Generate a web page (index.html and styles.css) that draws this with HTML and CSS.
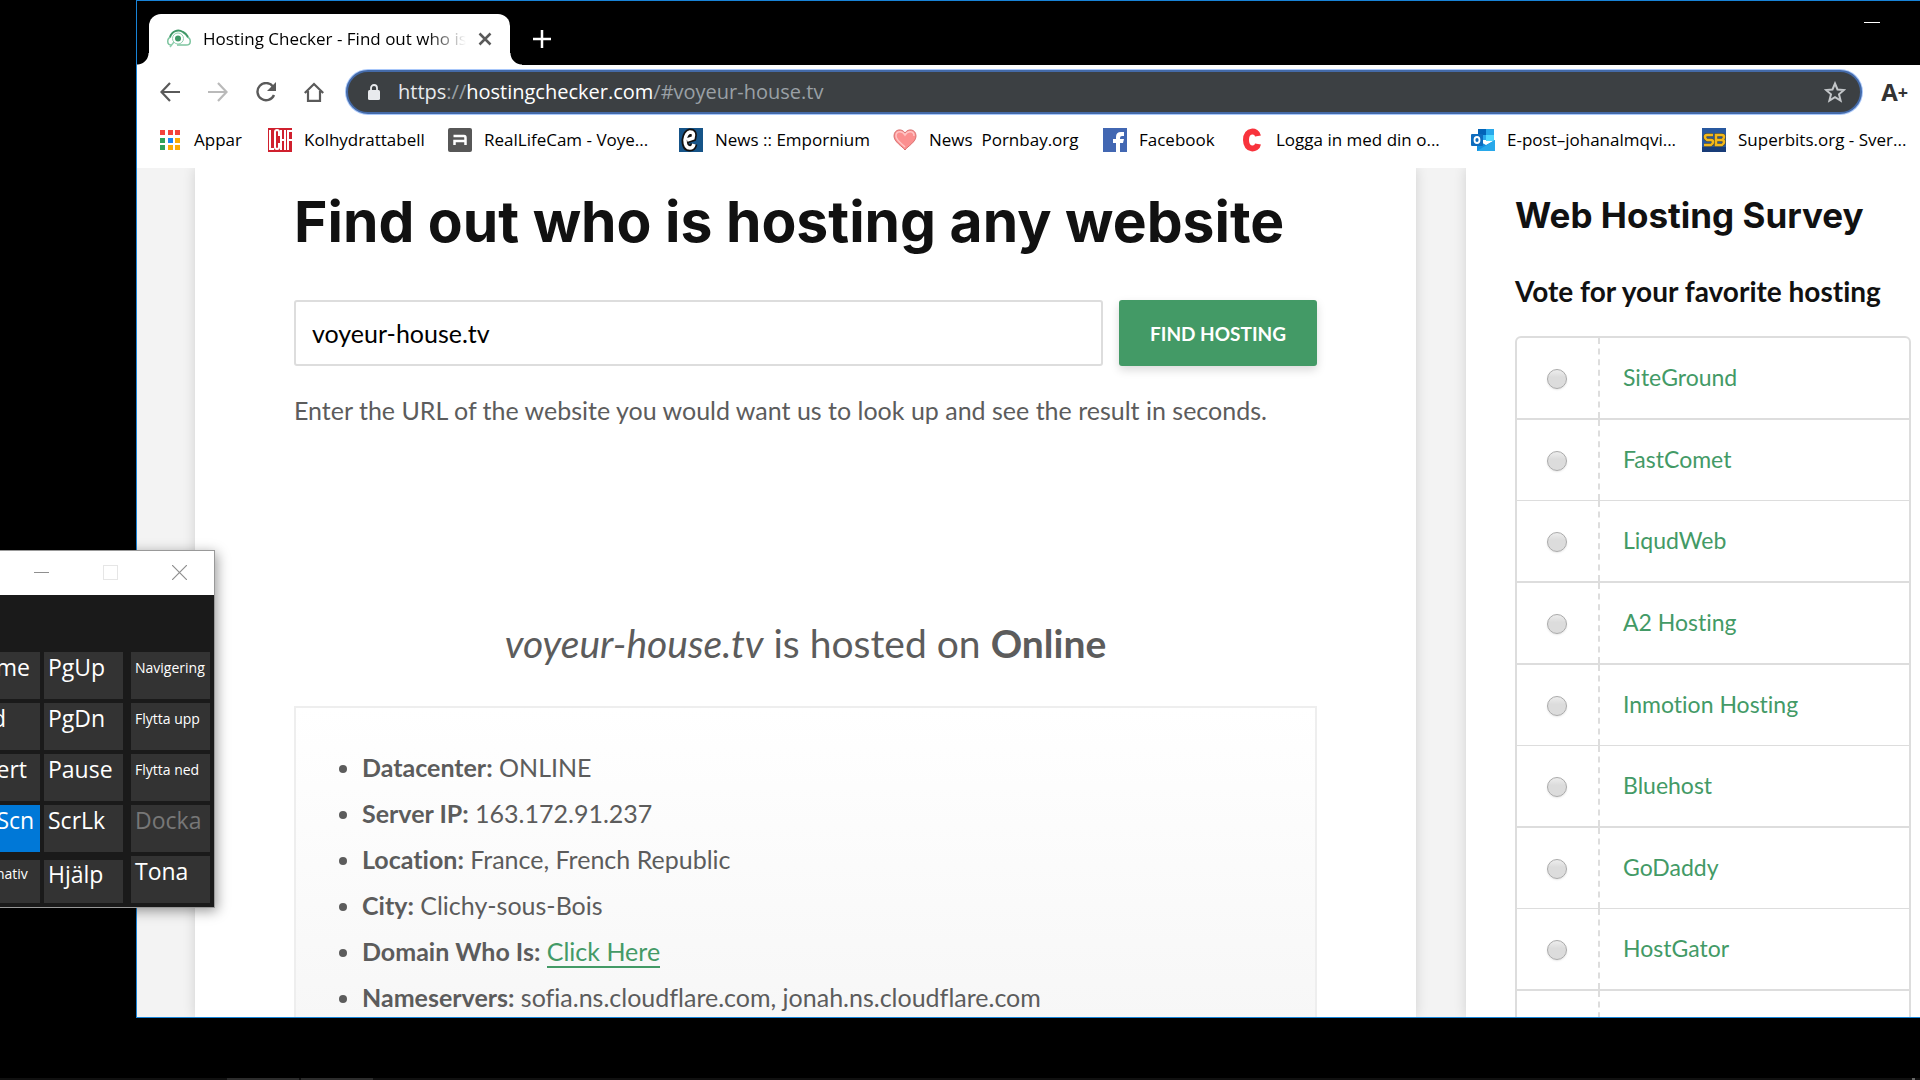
FILE: index.html
```html
<!DOCTYPE html>
<html lang="sv">
<head>
    <meta charset="UTF-8">
    <meta name="viewport" content="width=device-width, initial-scale=1.0">
    <title>Hosting Checker - Find out who is hosting any website</title>
    <link rel="stylesheet" href="styles.css">
</head>
<body>
<!-- Browser window -->
<div class="browser">
    <div class="tab-strip">
        <div class="tab">
            <svg class="tab-icon" width="24" height="20" viewBox="0 0 24 20" fill="none">
                <path d="M5 16C-1 16 0 9 4 8M20 8C24 9 25 16 19 16H10" stroke="#7cc49e" stroke-width="1.500"/>
                <path d="M3 8C5 2 11 0 16 3C18 4 20 6 21 8" stroke="#3f9867" stroke-width="2"/>
                <circle cx="11" cy="9.500" r="5.500" stroke="#8fcfae"/>
                <circle cx="11" cy="9.500" r="3" fill="#3f9867"/>
                <path d="M7 13L3 18" stroke="#8fcfae" stroke-width="1.500"/>
            </svg>
            <span class="tab-title">Hosting Checker - Find out who is</span>
            <button class="icon-button" aria-label="Stäng flik">
                <svg width="14" height="14" viewBox="0 0 14 14" stroke="#5a5a5a" stroke-width="2.500"><path d="M1.500 1.500L12.500 12.500M12.500 1.500L1.500 12.500"/></svg>
            </button>
        </div>
        <button class="icon-button new-tab" aria-label="Ny flik">
            <svg width="18" height="18" viewBox="0 0 18 18" stroke="#fff" stroke-width="2.500"><path d="M9 0V18M0 9H18"/></svg>
        </button>
        <button class="icon-button minimize" aria-label="Minimera">
            <svg width="16" height="2" viewBox="0 0 16 2"><path d="M0 0H16V1H0Z" fill="#fff"/></svg>
        </button>
    </div>

    <div class="toolbar">
        <button class="icon-button" aria-label="Bakåt">
            <svg width="20" height="20" viewBox="0 0 20 20" fill="none" stroke="#5a5a5a" stroke-width="2.200"><path d="M20 10H2M10 1L1.500 10L10 19"/></svg>
        </button>
        <button class="icon-button" aria-label="Framåt">
            <svg width="20" height="20" viewBox="0 0 20 20" fill="none" stroke="#bababa" stroke-width="2.200"><path d="M0 10H18M10 1L18.500 10L10 19"/></svg>
        </button>
        <button class="icon-button" aria-label="Ladda om">
            <svg width="20" height="20" viewBox="0 0 20 20" fill="none" stroke="#5a5a5a" stroke-width="2.400"><path d="M18 13A8.600 8.600 0 1 1 17 4.500"/><path d="M20 0V9H11Z" fill="#5a5a5a" stroke="none"/></svg>
        </button>
        <button class="icon-button" aria-label="Startsida">
            <svg width="20" height="20" viewBox="0 0 20 20" fill="none" stroke="#5a5a5a" stroke-width="2.200"><path d="M0.800 11L10 2L19.200 11M4 9V18.800H16V9"/></svg>
        </button>
        <div class="address">
            <svg width="12" height="16" viewBox="0 0 12 16"><path d="M3 7V4A3 3 0 0 1 9 4V7" fill="none" stroke="#e8eaed" stroke-width="1.800"/><rect y="6" width="12" height="10" rx="1.500" fill="#e8eaed"/></svg>
            <span class="url"><span class="scheme">https<i>://</i></span>hostingchecker.com<i>/#voyeur-house.tv</i></span>
            <button class="icon-button" aria-label="Bokmärk sidan">
                <svg width="22" height="22" viewBox="0 0 22 22" fill="none" stroke="#c3c6c9" stroke-width="2"><path d="M11 2.500L13.500 8.500L20 9L15 13.300L16.600 19.600L11 16.200L5.400 19.600L7 13.300L2 9L8.500 8.500Z"/></svg>
            </button>
        </div>
        <button class="icon-button zoom-text" aria-label="Större text">A<small>+</small></button>
    </div>

    <nav class="bookmarks">
        <a href="#">
            <svg width="24" height="24" viewBox="0 0 24 24">
                <path d="M2 2H7V7H2ZM10 2H15V7H10ZM17 2H22V7H17Z" fill="#f4433c"/>
                <path d="M2 10H7V15H2ZM2 17H7V22H2Z" fill="#2fa25a"/>
                <path d="M10 10H15V15H10Z" fill="#1c86f2"/>
                <path d="M17 10H22V15H17ZM10 17H15V22H10ZM17 17H22V22H17Z" fill="#fbab04"/>
            </svg>
            <span>Appar</span>
        </a>
        <a href="#">
            <svg width="24" height="24" viewBox="0 0 24 24" fill="none">
                <path d="M0 0H24V24H0Z" fill="#d0202e"/>
                <path d="M2 2V21H6M11 8V4Q11 2 9 2T7 4V19Q7 21 9 21T11 19V15M13 2V22M17 2V22M13 12H17M20 22V3H24M20 12H24" stroke="#fff" stroke-width="2"/>
            </svg>
            <span>Kolhydrattabell</span>
        </a>
        <a href="#">
            <svg width="24" height="24" viewBox="0 0 24 24" fill="none">
                <rect width="24" height="24" rx="2" fill="#575757"/>
                <path d="M6.500 17V13H17.500M5.500 8H16Q17.500 8 17.500 10V17" stroke="#fff" stroke-width="2.500"/>
            </svg>
            <span>RealLifeCam - Voye...</span>
        </a>
        <a href="#">
            <svg width="24" height="24" viewBox="0 0 24 24" fill="none">
                <path d="M0 0H24V24H0Z" fill="#165488"/>
                <path d="M8 12L14 10Q16 4 11 4Q7 5 6 12Q6 20 11 20Q14 20 15 16" stroke="#111" stroke-width="7"/>
                <path d="M8 12L14 10Q16 4 11 4Q7 5 6 12Q6 20 11 20Q14 20 15 16" stroke="#fff" stroke-width="3.500"/>
            </svg>
            <span>News :: Empornium</span>
        </a>
        <a href="#">
            <svg width="24" height="24" viewBox="0 0 24 24">
                <path d="M12 22C9 18 1 14 1 8C1 1 9 0 12 5C15 0 23 1 23 8C23 14 15 18 12 22Z" fill="#fb8f8f" stroke="#d87070"/>
                <path d="M12 19C9 16 3 12 3 8C3 3 9 2 12 7C15 2 21 3 21 8" fill="none" stroke="#ffc4c4" stroke-width="1.500"/>
            </svg>
            <span>News&nbsp; Pornbay.org</span>
        </a>
        <a href="#">
            <svg width="24" height="24" viewBox="0 0 24 24">
                <path d="M0 0H24V24H0Z" fill="#4267b2"/>
                <path d="M13 24V15H10V11H13V9Q13 4 18 4H21V8H19Q17 8 17 10V11H21L20 15H17V24Z" fill="#fff"/>
            </svg>
            <span>Facebook</span>
        </a>
        <a href="#">
            <svg width="24" height="24" viewBox="0 0 24 24" fill="none">
                <path d="M18 8C17 2 6 1 6 12C6 23 17 22 18 16" stroke="#f8333c" stroke-width="6"/>
            </svg>
            <span>Logga in med din o...</span>
        </a>
        <a href="#">
            <svg width="24" height="24" viewBox="0 0 24 24">
                <path d="M7 1H23V12H7Z" fill="#28a8ea"/>
                <path d="M7 1H15V7H7Z" fill="#0364b8"/>
                <path d="M15 7H23V13H15Z" fill="#50d9ff"/>
                <path d="M6 12L15 17L24 12V23H6Z" fill="#1490df"/>
                <path d="M6 23L24 12V23Z" fill="#28a8ea"/>
                <rect y="6" width="12" height="12" rx="1" fill="#0f6cbd"/>
                <ellipse cx="6" cy="12" rx="2.500" ry="3" fill="none" stroke="#fff" stroke-width="1.800"/>
            </svg>
            <span>E-post–johanalmqvi...</span>
        </a>
        <a href="#">
            <svg width="24" height="24" viewBox="0 0 24 24" fill="none">
                <path d="M0 0H24V24H0Z" fill="#28589f"/>
                <path d="M0 19H24V24H0Z" fill="#183c78"/>
                <path d="M11 7H5Q3 7 3 9T5 12H9Q11 12 11 14T9 17H2M14 17V7H20Q22 7 22 9T20 12H14H20Q22 12 22 14T20 17Z" stroke="#4a4a3a" stroke-width="3.500"/>
                <path d="M11 7H5Q3 7 3 9T5 12H9Q11 12 11 14T9 17H2M14 17V7H20Q22 7 22 9T20 12H14H20Q22 12 22 14T20 17Z" stroke="#f3b81a" stroke-width="2.500"/>
            </svg>
            <span>Superbits.org - Sver...</span>
        </a>
    </nav>

    <div class="page">
        <main class="content">
            <h1>Find out who is hosting any website</h1>
            <form class="search">
                <input type="text" value="voyeur-house.tv" aria-label="Website URL">
                <button type="button">FIND HOSTING</button>
            </form>
            <p class="hint">Enter the URL of the website you would want us to look up and see the result in seconds.</p>
            <h2 class="result"><em>voyeur-house.tv</em> is hosted on <b>Online</b></h2>
            <ul class="details">
                <li><b>Datacenter:</b> ONLINE</li>
                <li><b>Server IP:</b> 163.172.91.237</li>
                <li><b>Location:</b> France, French Republic</li>
                <li><b>City:</b> Clichy-sous-Bois</li>
                <li><b>Domain Who Is:</b> <a href="#">Click Here</a></li>
                <li><b>Nameservers:</b> sofia.ns.cloudflare.com, jonah.ns.cloudflare.com</li>
            </ul>
        </main>
        <aside class="survey">
            <h2>Web Hosting Survey</h2>
            <h3>Vote for your favorite hosting</h3>
            <div class="options">
                <div class="option"><span><input type="radio" name="host" id="siteground"></span><label for="siteground">SiteGround</label></div>
                <div class="option thin"><span><input type="radio" name="host" id="fastcomet"></span><label for="fastcomet">FastComet</label></div>
                <div class="option"><span><input type="radio" name="host" id="liqudweb"></span><label for="liqudweb">LiqudWeb</label></div>
                <div class="option"><span><input type="radio" name="host" id="a2"></span><label for="a2">A2 Hosting</label></div>
                <div class="option thin"><span><input type="radio" name="host" id="inmotion"></span><label for="inmotion">Inmotion Hosting</label></div>
                <div class="option"><span><input type="radio" name="host" id="bluehost"></span><label for="bluehost">Bluehost</label></div>
                <div class="option thin"><span><input type="radio" name="host" id="godaddy"></span><label for="godaddy">GoDaddy</label></div>
                <div class="option"><span><input type="radio" name="host" id="hostgator"></span><label for="hostgator">HostGator</label></div>
                <div class="option"><span></span></div>
            </div>
        </aside>
    </div>
</div>

<!-- On-screen keyboard, partly outside the left edge -->
<div class="keyboard">
    <div class="title-bar">
        <button class="icon-button" aria-label="Minimera"><svg width="15" height="15" viewBox="0 0 15 15"><path d="M0 7H15V8H0Z" fill="#8f8f8f"/></svg></button>
        <button class="icon-button" aria-label="Maximera" disabled><svg width="15" height="15" viewBox="0 0 15 15" fill="none" stroke="#e6e6e6"><rect x="0.500" y="0.500" width="14" height="14"/></svg></button>
        <button class="icon-button" aria-label="Stäng"><svg width="15" height="15" viewBox="0 0 15 15" stroke="#8f8f8f" stroke-width="1.200"><path d="M0 0L15 15M15 0L0 15"/></svg></button>
    </div>
    <div class="keys">
        <div class="key-column">
            <button>Home</button>
            <button>End</button>
            <button>Insert</button>
            <button class="active">PrtScn</button>
            <button class="small short">Alternativ</button>
        </div>
        <div class="key-column">
            <button>PgUp</button>
            <button>PgDn</button>
            <button>Pause</button>
            <button>ScrLk</button>
            <button class="short">Hjälp</button>
        </div>
        <div class="key-column last">
            <button class="small">Navigering</button>
            <button class="small">Flytta upp</button>
            <button class="small">Flytta ned</button>
            <button disabled>Docka</button>
            <button>Tona</button>
        </div>
    </div>
</div>

<div class="taskbar"><i></i><i></i><i></i></div>
</body>
</html>
```
FILE: styles.css
```css
* {
    box-sizing: border-box;
}

body {
    margin: 0;
    height: 100vh;
    overflow: hidden;
    background-color: #000;
    font-family: "Open Sans", "Noto Sans", sans-serif;
    display: flex;
    flex-direction: column;
}

.icon-button {
    display: flex;
    align-items: center;
    justify-content: center;
    padding: 0;
    border: none;
    background: none;
}

.browser {
    flex: 1;
    min-height: 0;
    display: flex;
    flex-direction: column;
    margin: 0 0 60px 136px;
    border: 1px solid #1883d7;
    border-right: none;
    overflow: hidden;
}

.tab-strip {
    display: flex;
    flex: none;
    height: 64px;
    padding: 13px 40px 0 12px;
}

.tab {
    position: relative;
    display: flex;
    align-items: center;
    width: 361px;
    padding: 0 18px 2px;
    background-color: #fff;
    border-radius: 12px 12px 0 0;
}

.tab::before,
.tab::after {
    content: "";
    position: absolute;
    bottom: 0;
    width: 12px;
    height: 12px;
}

.tab::before {
    left: -12px;
    background: radial-gradient(circle at 0 0, #000 11px, #fff 12px);
}

.tab::after {
    right: -12px;
    background: radial-gradient(circle at 100% 0, #000 11px, #fff 12px);
}

.tab-title {
    flex: 1;
    margin: 0 12px;
    overflow: hidden;
    white-space: nowrap;
    font-size: 17px;
    -webkit-mask-image: linear-gradient(to right, #000 85%, transparent);
    mask-image: linear-gradient(to right, #000 85%, transparent);
}

.new-tab {
    margin-left: 23px;
    padding-bottom: 2px;
}

.minimize {
    height: 17px;
    margin-left: auto;
}

.toolbar {
    display: flex;
    flex: none;
    align-items: center;
    gap: 28px;
    height: 53px;
    padding: 0 12px 0 23px;
    background-color: #fff;
}

.address {
    flex: 1;
    display: flex;
    align-items: center;
    height: 44px;
    margin-left: -6px;
    padding: 0 14px 0 20px;
    background-color: #3c4043;
    border: 2px solid #446aa8;
    border-radius: 22px;
    box-shadow: 0 0 0 1px #a8c7fa;
}

.url {
    flex: 1;
    margin-left: 18px;
    font-size: 20px;
    color: #fff;
}

.url i {
    font-style: normal;
    color: #9aa0a6;
}

.scheme {
    color: #e8eaed;
}

.zoom-text {
    margin-left: -9px;
    font: bold 24px "Open Sans", sans-serif;
    color: #333;
}

.zoom-text small {
    font-size: 18px;
}

.bookmarks {
    display: grid;
    grid-template-columns: 110px 180px 231px 214px 210px 137px 231px 231px auto;
    align-items: center;
    flex: none;
    height: 50px;
    padding: 0 0 7px 21px;
    background-color: #fff;
}

.bookmarks a {
    display: flex;
    align-items: center;
    gap: 12px;
    color: #000;
    font-size: 17px;
    line-height: 22px;
    text-decoration: none;
    white-space: nowrap;
}

.page {
    flex: 1;
    min-height: 0;
    display: flex;
    gap: 50px;
    padding-left: 58px;
    overflow: hidden;
    background-color: #f3f3f3;
    font-family: Lato, sans-serif;
    font-variant-ligatures: none;
    color: #5c5c5c;
}

.content {
    flex: 1;
    min-width: 0;
    padding: 20px 99px 0;
    background-color: #fff;
    box-shadow: 0 0 12px rgba(0, 0, 0, 0.14);
}

.content h1 {
    margin: 0;
    font: bold 57px/68px Inter, sans-serif;
    color: #111;
    white-space: nowrap;
}

.search {
    display: flex;
    gap: 16px;
    margin-top: 44px;
}

.search input {
    flex: 1;
    min-width: 0;
    height: 66px;
    padding: 0 16px;
    border: 2px solid #ddd;
    border-radius: 3px;
    font: 25px Lato, sans-serif;
    color: #000;
}

.search button {
    width: 198px;
    border: none;
    border-radius: 3px;
    background-color: #439a66;
    box-shadow: 0 4px 10px rgba(0, 0, 0, 0.15);
    font: bold 19px Lato, sans-serif;
    color: #fff;
}

.hint {
    margin: 21px 0 0;
    font-size: 25px;
    line-height: 46px;
    white-space: nowrap;
}

.result {
    margin: 180px 0 0;
    font-size: 39px;
    font-weight: normal;
    line-height: 60px;
    text-align: center;
}

.details {
    margin: 33px 0 0;
    padding: 36px 0 40px 66px;
    border: 2px solid #eee;
    background: linear-gradient(#fff, #f6f6f6);
    font-size: 25px;
    line-height: 46px;
}

.details a {
    color: #439a66;
    border-bottom: 2px solid #439a66;
    text-decoration: none;
}

.survey {
    flex: none;
    width: 454px;
    padding: 23px 9px 0 49px;
    background-color: #fff;
    box-shadow: 0 0 12px rgba(0, 0, 0, 0.14);
    color: #111;
    white-space: nowrap;
}

.survey h2 {
    margin: 0;
    font: bold 35px/48px Inter, sans-serif;
}

.survey h3 {
    margin: 28px 0 0;
    font-size: 28px;
    line-height: 48px;
}

.options {
    margin-top: 21px;
    border: 2px solid #ddd;
    border-radius: 6px;
}

.option {
    display: flex;
    box-sizing: content-box;
    height: 80px;
    border-bottom: 2px solid #ddd;
}

.option.thin {
    border-bottom-width: 1px;
}

.option span {
    display: flex;
    align-items: center;
    justify-content: center;
    width: 83px;
    padding-right: 1px;
    border-right: 2px dashed #ddd;
}

.option input {
    appearance: none;
    width: 20px;
    height: 20px;
    margin: 2px 0 0;
    border: 1px solid #aaa;
    border-radius: 50%;
    background: linear-gradient(#ededed, #dcdcdc 40%);
    box-shadow: 0 1px 2px rgba(0, 0, 0, 0.1);
}

.option label {
    padding-left: 23px;
    font-size: 23px;
    line-height: 78px;
    color: #439a66;
}

.keyboard {
    position: absolute;
    left: -40px;
    top: 550px;
    width: 255px;
    border: 1px solid #999;
    background-color: #1a1a1a;
    box-shadow: 2px 3px 12px rgba(0, 0, 0, 0.4);
}

.title-bar {
    display: flex;
    justify-content: flex-end;
    gap: 54px;
    height: 44px;
    padding: 0 27px 1px 0;
    background-color: #fff;
}

.keys {
    display: flex;
    gap: 4px;
    padding: 57px 4px 4px 0;
}

.key-column {
    display: flex;
    flex-direction: column;
    gap: 4px;
    width: 79px;
}

.key-column.last {
    margin-left: 4px;
}

.key-column button {
    height: 47px;
    padding: 0 0 18px 4px;
    border: none;
    background-color: #333;
    font: 23px/28px "Open Sans", sans-serif;
    color: #fff;
    text-align: left;
    white-space: nowrap;
}

.key-column .small {
    padding-bottom: 15px;
    font-size: 14px;
}

.key-column .short {
    height: 43px;
    margin-top: 4px;
}

.key-column .active {
    background-color: #0078d7;
}

.key-column button:disabled {
    color: #777;
}

.taskbar {
    display: flex;
    gap: 2px;
    flex: none;
    height: 2px;
    padding-left: 227px;
    background-color: #101010;
}

.taskbar i {
    width: 72px;
    background-color: #2c2c2c;
}

.taskbar i:last-child {
    width: 3px;
    margin-left: auto;
    margin-right: 5px;
    background-color: #666;
}
```
